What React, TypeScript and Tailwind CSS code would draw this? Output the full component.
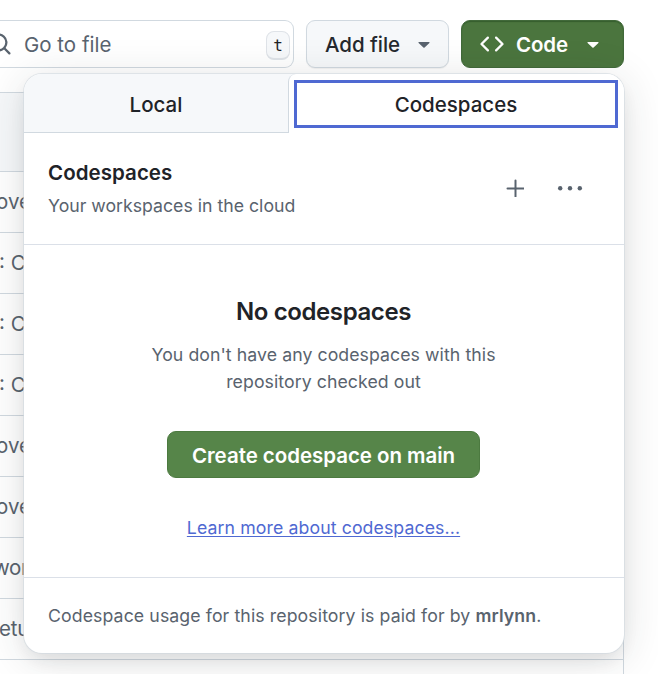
import React from "react";

const rows = [
  { text: "ove", x: "-ml-[4px]" },
  { text: ": C", x: "-ml-[1px]" },
  { text: ": C", x: "-ml-[1px]" },
  { text: ": C", x: "-ml-[1px]" },
  { text: "ove", x: "-ml-[4px]" },
  { text: "ove", x: "-ml-[4px]" },
  { text: "wor", x: "-ml-[7px] tracking-[-0.3px]" },
  { text: "etu", x: "-ml-[1px] tracking-[-0.2px]" },
];

function Caret({ className }: { className: string }) {
  return (
    <svg width="12" height="6" viewBox="0 0 12 6" className={className} fill="currentColor">
      <path d="M1 0h10c.6 0 .8.6.4 1L6.6 5.5a.8.8 0 0 1-1.2 0L.6 1C.2.6.4 0 1 0Z" />
    </svg>
  );
}

function Toolbar() {
  return (
    <div className="flex h-[92px] items-start pt-[20px]">
      <div className="flex h-[48px] w-[294px] items-center rounded-r-[9px] border border-l-0 border-[#d1d9e0] bg-white pr-[3px]">
        <svg width="24" height="24" viewBox="0 0 16 16" className="-ml-[12px] shrink-0 text-[#59636e]" fill="currentColor">
          <path d="M10.68 11.74a6 6 0 0 1-7.922-8.982 6 6 0 0 1 8.982 7.922l3.04 3.04a.749.749 0 0 1-.326 1.275.749.749 0 0 1-.734-.215ZM11.5 7a4.499 4.499 0 1 0-8.997 0A4.499 4.499 0 0 0 11.5 7Z" />
        </svg>
        <span className="ml-[12px] pt-[2px] text-[20.5px] text-[#59636e]">Go to file</span>
        <kbd className="mt-[2px] ml-auto flex h-[29px] w-[24px] items-center justify-center rounded-[8px] border border-b-2 border-[#dfe3e8] bg-[#f6f8fa] pt-[2px] font-['DejaVu_Sans_Mono',monospace] text-[16px] leading-none text-[#1f2328]">t</kbd>
      </div>
      <button className="ml-[12px] flex h-[48px] w-[143px] items-center rounded-[9px] border border-[#d1d9e0] bg-[#f6f8fa] pl-[18px] text-[20.5px] font-medium tracking-[-0.05px] text-[#25292e] shadow-[0_1px_1px_rgba(31,35,40,0.06)]">
        <span className="pt-[2px]">Add file</span>
        <Caret className="mt-[2px] mr-[18px] ml-auto text-[#59636e]" />
      </button>
      <button className="ml-[12px] flex h-[48px] w-[163px] items-center rounded-[9px] border border-[#41693a] bg-[#4b753e] pl-[18px] text-[20.5px] font-semibold tracking-[-0.15px] text-white shadow-[inset_0_1px_1px_rgba(20,60,20,0.4)]">
        <svg width="24" height="24" viewBox="0 0 16 16" fill="currentColor">
          <path d="m11.28 3.22 4.25 4.25a.75.75 0 0 1 0 1.06l-4.25 4.25a.749.749 0 0 1-1.275-.326.749.749 0 0 1 .215-.734L13.94 8l-3.72-3.72a.749.749 0 0 1 .326-1.275.749.749 0 0 1 .734.215Zm-6.56 0a.751.751 0 0 1 1.042.018.751.751 0 0 1 .018 1.042L2.06 8l3.72 3.72a.749.749 0 0 1-.326 1.275.749.749 0 0 1-.734-.215L.47 8.53a.75.75 0 0 1 0-1.06Z" />
        </svg>
        <span className="ml-[12px] pt-[2px]">Code</span>
        <Caret className="mt-[2px] mr-[24px] ml-auto" />
      </button>
    </div>
  );
}

function FileTable() {
  return (
    <div className="h-[600px] w-[624px] border-t border-r border-[#d1d9e0]">
      <div className="h-[78px] bg-[#f6f8fa]" />
      {rows.map((row, i) => (
        <div key={i} className="flex h-[61px] items-center border-t border-[#d1d9e0] pt-[1px] text-[20.5px] whitespace-pre text-[#59636e]">
          <span className={row.x}>{row.text}</span>
        </div>
      ))}
      <div className="border-t border-[#d1d9e0]" />
    </div>
  );
}

function CodeMenu() {
  return (
    <div className="absolute top-[74px] left-[24px] flex h-[579px] w-[600px] flex-col overflow-clip rounded-[18px] bg-white shadow-[0_0_0_1px_rgba(209,217,224,0.6),0_9px_18px_-4px_rgba(37,41,46,0.1),0_6px_44px_0_rgba(37,41,46,0.14)]">
      <div className="flex h-[59px] shrink-0 bg-[#f6f8fa] text-[20.5px] font-medium text-[#1f2328]">
        <div className="flex w-[264px] items-center justify-center border-b border-[#d1d9e0] pt-[5px]">
          <span>Local</span>
        </div>
        <div className="flex flex-1 rounded-tl-[8px] border-l border-[#d1d9e0] bg-white px-[5px] pt-[6px] pb-[5px]">
          <div className="flex w-[324px] items-center justify-center border-[3px] border-[#4f69d2] pt-[2px]">
            <span>Codespaces</span>
          </div>
        </div>
      </div>
      <div className="flex h-[112px] shrink-0 items-center border-b border-[#dbe0e8] pr-[41px] pl-[24px]">
        <div className="flex flex-col">
          <h3 className="text-[20.5px] leading-[30px] font-semibold tracking-[0.05px] text-[#1f2328]">Codespaces</h3>
          <p className="mt-[4px] text-[17.7px] leading-[28px] text-[#59636e]">Your workspaces in the cloud</p>
        </div>
        <svg width="18" height="18" viewBox="0 0 18 18" className="mb-[2px] ml-auto text-[#59636e]" stroke="currentColor" strokeWidth="2" strokeLinecap="round">
          <path d="M9.5 1.5v16M1.5 9.5h16" />
        </svg>
        <svg width="26" height="6" viewBox="0 0 26 6" className="mb-[2px] ml-[33px] text-[#59636e]" fill="currentColor">
          <circle cx="3.2" cy="3.2" r="2.2" />
          <circle cx="13" cy="3.2" r="2.2" />
          <circle cx="22.8" cy="3.2" r="2.2" />
        </svg>
      </div>
      <div className="flex flex-1 flex-col items-center border-b border-[#dbe0e8] pt-[49px] pr-[1px]">
        <h4 className="text-[24px] leading-[36px] font-semibold tracking-[-0.4px] text-[#1f2328]">No codespaces</h4>
        <p className="mt-[11px] text-center text-[17.7px] leading-[27px] tracking-[0.07px] text-[#59636e]">
          You don't have any codespaces with this
          <br />
          repository checked out
        </p>
        <button className="mt-[36px] flex h-[47px] w-[313px] items-center justify-center rounded-[9px] border border-[#4c7a40] bg-[#568549] pt-[3px] text-[20.5px] font-semibold tracking-[-0.04px] text-white">
          <span>Create codespace on main</span>
        </button>
        <a href="#" className="mt-[36px] text-[17.7px] leading-[27px] tracking-[0.1px] text-[#4f69d2] underline underline-offset-2">Learn more about codespaces...</a>
      </div>
      <div className="flex h-[75px] shrink-0 items-center pt-[2px] pl-[24px] text-[17.7px] tracking-[0.1px] text-[#59636e]">
        <span>Codespace usage for this repository is paid for by <b className="font-semibold">mrlynn</b>.</span>
      </div>
    </div>
  );
}

export default function App() {
  return (
    <div className="relative h-[674px] w-[658px] overflow-hidden bg-white font-['Inter','Liberation_Sans',sans-serif]">
      <Toolbar />
      <FileTable />
      <CodeMenu />
    </div>
  );
}
